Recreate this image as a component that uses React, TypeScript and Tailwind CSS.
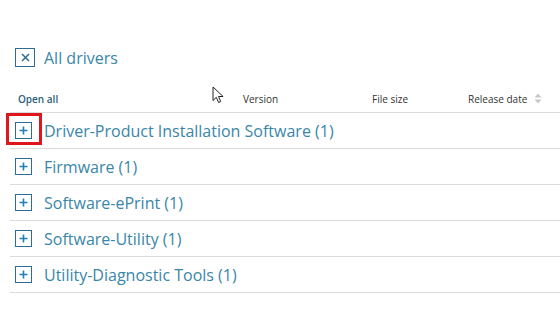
import React from "react";

const CATEGORIES = [
  "Driver-Product Installation Software (1)",
  "Firmware (1)",
  "Software-ePrint (1)",
  "Software-Utility (1)",
  "Utility-Diagnostic Tools (1)",
];

function PlusBox() {
  return (
    <div className="w-[17px] h-[17px] border border-[#2f6d8c] flex items-center justify-center">
      <svg width="9" height="9" viewBox="0 0 9 9">
        <path d="M4.5 0.5v8M0.5 4.5h8" stroke="#1f7fb4" strokeWidth="1.6" />
      </svg>
    </div>
  );
}

export default function App() {
  return (
    <div className="relative w-[560px] h-[314px] bg-white overflow-hidden font-['Open_Sans',sans-serif]">
      {/* mouse pointer */}
      <svg className="absolute left-[212px] top-[86px]" width="13" height="18" viewBox="0 0 13 18">
        <path d="M1 1v13.5l3.3-3.2 2.3 5.2 2.1-.9-2.2-5.1h4.6z" fill="white" stroke="#222" strokeWidth="1" strokeLinejoin="round" />
      </svg>

      <div className="pt-[48px] pl-[15px] flex items-center gap-[9px]">
        <div className="w-[20px] h-[19px] border border-[#2f6d8c] flex items-center justify-center">
          <svg width="9" height="9" viewBox="0 0 9 9">
            <path d="M1 1l7 7M8 1l-7 7" stroke="#2f6d8c" strokeWidth="1.5" />
          </svg>
        </div>
        <span className="text-[16px] text-[#3a86a8] leading-none">All drivers</span>
      </div>

      <div className="ml-[10px] h-[46px] flex items-end pb-[8px] border-b border-[#dcdcdc] text-[10px] leading-none">
        <span className="w-[233px] pl-[8px] text-[#2c5f7a] font-semibold">Open all</span>
        <span className="w-[129px] text-[#333]">Version</span>
        <span className="w-[96px] text-[#333]">File size</span>
        <span className="flex items-center gap-[7px] text-[#333]">
          Release date
          <svg width="8" height="11" viewBox="0 0 8 11">
            <path d="M4 0.5l3.5 4h-7zM4 10.5l3.5-4h-7z" fill="#c8c8c8" />
          </svg>
        </span>
      </div>

      {CATEGORIES.map((name, i) => (
        <div key={name} className="ml-[10px] h-[36px] border-b border-[#dcdcdc] flex items-center pl-[5px] gap-[12px]">
          <div className="relative">
            <PlusBox />
            {i === 0 && (
              <div className="absolute left-[-9px] top-[-9px] w-[36px] h-[32px] border-[3px] border-[#e0161d]" />
            )}
          </div>
          <span className="text-[16px] text-[#3a86a8] leading-none">{name}</span>
        </div>
      ))}
    </div>
  );
}
